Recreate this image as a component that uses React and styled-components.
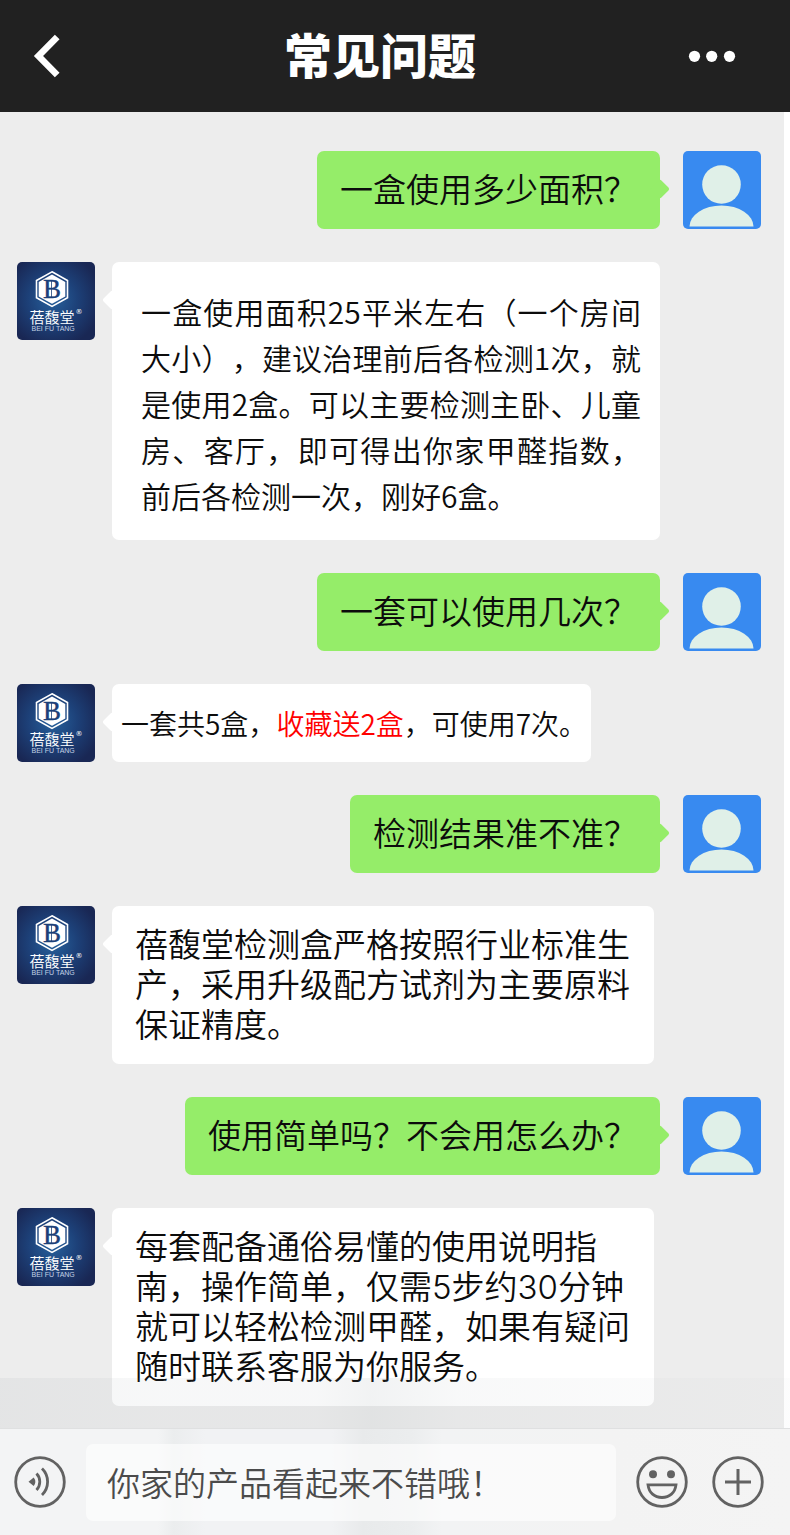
import styled, { createGlobalStyle } from "styled-components";

const GlobalStyle = createGlobalStyle`
  * {
    box-sizing: border-box;
  }

  body {
    margin: 0;
    background: #ffffff;
    color: #0c0c0c;
    font-family: "Noto Sans CJK SC", sans-serif;
    font-weight: 350;
    text-spacing-trim: space-all;
  }

  button,
  input {
    font: inherit;
    border: 0;
    padding: 0;
    background: none;
  }
`;

const Page = styled.div`
  display: flex;
  flex-direction: column;
  min-height: 100vh;
`;

const Header = styled.header`
  display: grid;
  grid-template-columns: 52px 1fr 48px;
  align-items: center;
  height: 112px;
  padding: 0 54px 0 20px;
  background: #212121;
  color: #ffffff;
`;

const Title = styled.h1`
  margin: 0;
  padding-bottom: 6px;
  font-size: 48px;
  line-height: 56px;
  font-weight: 900;
  text-align: center;
`;

const IconButton = styled.button`
  display: flex;
  flex-shrink: 0;
  align-items: center;
  justify-content: center;
  width: ${(props) => props.$width || 52}px;
  height: 52px;
  color: inherit;
  cursor: pointer;
`;

const Chat = styled.main`
  display: flex;
  flex-direction: column;
  flex: 1;
  gap: 33px;
  margin-right: 6px;
  padding: 39px 23px 22px 17px;
  background: #ededed;
`;

const Row = styled.div`
  display: flex;
  flex-direction: ${(props) => (props.$mine ? "row-reverse" : "row")};
  align-items: flex-start;
  gap: ${(props) => (props.$mine ? 23 : 17)}px;
`;

const Avatar = styled.svg`
  flex-shrink: 0;
  width: 78px;
  height: 78px;
  border-radius: 5px;
`;

const Bubble = styled.p`
  position: relative;
  max-width: 548px;
  margin: 0;
  padding: 19px 23px;
  border-radius: 7px;
  background: ${(props) => (props.$mine ? "#95ed69" : "#ffffff")};
  font-family: Inter, "Noto Sans CJK SC", sans-serif;
  font-size: 33px;
  line-height: 40px;

  &::before {
    content: "";
    position: absolute;
    top: 31px;
    ${(props) => (props.$mine ? "right" : "left")}: -7px;
    width: 14px;
    height: 14px;
    border-radius: 2px;
    background: inherit;
    transform: rotate(45deg);
  }
`;

const LongBubble = styled(Bubble)`
  padding: 26px 19px 22px 29px;
  font-family: "Noto Sans CJK SC", sans-serif;
  font-size: 30px;
  line-height: 46px;
  text-align: justify;
`;

const ShortBubble = styled(Bubble)`
  padding: 19px 4px 19px 9px;
  font-family: "Noto Sans CJK SC", sans-serif;
  font-size: 28px;
`;

const AnswerBubble = styled(Bubble)`
  max-width: 542px;
`;

const Highlight = styled.span`
  color: #ff0000;
`;

const Footer = styled.footer`
  position: relative;
  margin-top: -50px;
  padding-top: 50px;
  background: linear-gradient(
    90deg,
    rgba(120, 130, 140, 0.08) 0%,
    rgba(120, 130, 140, 0.06) 20%,
    rgba(120, 130, 140, 0.06) 40%,
    rgba(120, 135, 140, 0.1) 47%,
    rgba(120, 130, 140, 0.05) 58%,
    rgba(120, 130, 140, 0.02) 100%
  );
`;

const Composer = styled.form`
  display: flex;
  align-items: center;
  height: 107px;
  padding: 0 26px 0 14px;
  border-top: 1px solid #dfe0e1;
  background: linear-gradient(
    90deg,
    #f3f4f5 0%,
    #f3f4f5 20%,
    #ebedee 22%,
    #f1f2f4 26%,
    #f1f2f4 42%,
    #e8eaeb 46%,
    #ebedee 52%,
    #f2f3f4 56%,
    #f3f3f3 78%,
    #f4f4f4 100%
  );
  color: #626262;
`;

const Field = styled.input`
  flex: 1;
  min-width: 0;
  height: 77px;
  margin: 0 20px;
  padding: 0 21px;
  border-radius: 7px;
  background: rgba(255, 255, 255, 0.6);
  color: #4b4b4b;
  font-size: 33px;

  &:focus {
    outline: none;
  }
`;

const Tools = styled.div`
  display: flex;
  gap: 24px;
`;

const UserAvatar = () => (
  <Avatar viewBox="0 0 78 78" role="img" aria-label="用户">
    <rect width="78" height="78" fill="#388af0" />
    <circle cx="38.5" cy="33.5" r="19.3" fill="#e0f0e8" />
    <path d="M6.5 75.5a32 21 0 0 1 64 0z" fill="#e0f0e8" />
  </Avatar>
);

const ShopAvatar = () => (
  <Avatar viewBox="0 0 78 78" role="img" aria-label="蓓馥堂">
    <defs>
      <radialGradient id="shop" cx="46%" cy="48%" r="62%">
        <stop offset="0" stopColor="#27619c" />
        <stop offset="0.5" stopColor="#1d4179" />
        <stop offset="1" stopColor="#192754" />
      </radialGradient>
    </defs>
    <rect width="78" height="78" fill="url(#shop)" />
    <path
      d="M35 9.8 50.5 18.5v17.2L35 44.4 19.500 35.7V18.5z"
      fill="none"
      stroke="#ffffff"
      strokeWidth="1.6"
    />
    <path d="M35 12.5 48.3 20v14.400L35 41.700 21.700 34.400V20z" fill="#ffffff" />
    <text
      x="35"
      y="36"
      textAnchor="middle"
      fontFamily="Liberation Serif, serif"
      fontWeight="400"
      fontSize="27"
      fill="#1b4079"
      stroke="#1b4079"
      strokeWidth="0.4"
    >
      B
    </text>
    <path d="M34.500 19v17" stroke="#1b4079" strokeWidth="0.8" />
    <text x="12.5" y="61" fontSize="15" fontWeight="350" fill="#ffffff">
      蓓馥堂
    </text>
    <text
      x="58.5"
      y="52"
      fontFamily="DejaVu Sans, sans-serif"
      fontSize="7"
      fontWeight="400"
      fill="#ffffff"
    >
      ®
    </text>
    <text
      x="14.5"
      y="69"
      fontFamily="Liberation Sans, sans-serif"
      fontSize="7"
      fontWeight="400"
      fill="#c3d2e5"
    >
      BEI FU TANG
    </text>
  </Avatar>
);

const BackIcon = () => (
  <svg width="52" height="52" viewBox="0 0 52 52" fill="none">
    <path d="M37.2 7 18.500 26 37.2 45" stroke="#ffffff" strokeWidth="6.6" />
  </svg>
);

const MoreIcon = () => (
  <svg width="48" height="12" viewBox="0 0 48 12" fill="#ffffff">
    <circle cx="6.5" cy="6.3" r="5.6" />
    <circle cx="23.7" cy="6.3" r="5.6" />
    <circle cx="41.5" cy="6.3" r="5.6" />
  </svg>
);

const VoiceIcon = () => (
  <svg width="52" height="52" viewBox="0 0 52 52" fill="none" stroke="currentColor">
    <circle cx="26" cy="26" r="24.3" strokeWidth="2.8" />
    <path d="M14.5 25.7 19.7 21.500a7 7 0 0 1 0 8.5z" fill="currentColor" stroke="none" />
    <path d="M22.5 17.5a12 12 0 0 1 0 16.5" strokeWidth="2.8" />
    <path d="M28 12.5a18.5 18.5 0 0 1 0 26.5" strokeWidth="2.8" />
  </svg>
);

const SmileIcon = () => (
  <svg width="52" height="52" viewBox="0 0 52 52" fill="none" stroke="currentColor">
    <circle cx="26" cy="26" r="24.3" strokeWidth="2.8" />
    <circle cx="17" cy="18.3" r="4" fill="currentColor" stroke="none" />
    <circle cx="35" cy="18.3" r="4" fill="currentColor" stroke="none" />
    <path d="M12 28.8h28c-1 8-6.5 12.7-14 12.7s-13-4.7-14-12.7z" strokeWidth="2.8" />
  </svg>
);

const PlusIcon = () => (
  <svg width="52" height="52" viewBox="0 0 52 52" fill="none" stroke="currentColor">
    <circle cx="26" cy="26" r="24.3" strokeWidth="2.8" />
    <path d="M13 26h26M26 13v26" strokeWidth="3" />
  </svg>
);

const Question = ({ children }) => (
  <Row $mine>
    <UserAvatar />
    <Bubble $mine>{children}</Bubble>
  </Row>
);

const App = () => {
  return (
    <Page>
      <GlobalStyle />
      <Header>
        <IconButton type="button" aria-label="返回">
          <BackIcon />
        </IconButton>
        <Title>常见问题</Title>
        <IconButton type="button" $width={48} aria-label="更多">
          <MoreIcon />
        </IconButton>
      </Header>
      <Chat>
        <Question>一盒使用多少面积？</Question>
        <Row>
          <ShopAvatar />
          <LongBubble>
            一盒使用面积25平米左右（一个房间大小），建议治理前后各检测1次，就是使用2盒。可以主要检测主卧、儿童房、客厅，即可得出你家甲醛指数，前后各检测一次，刚好6盒。
          </LongBubble>
        </Row>
        <Question>一套可以使用几次？</Question>
        <Row>
          <ShopAvatar />
          <ShortBubble>
            一套共5盒，<Highlight>收藏送2盒</Highlight>，可使用7次。
          </ShortBubble>
        </Row>
        <Question>检测结果准不准？</Question>
        <Row>
          <ShopAvatar />
          <AnswerBubble>
            蓓馥堂检测盒严格按照行业标准生产，采用升级配方试剂为主要原料保证精度。
          </AnswerBubble>
        </Row>
        <Question>使用简单吗？不会用怎么办？</Question>
        <Row>
          <ShopAvatar />
          <AnswerBubble>
            每套配备通俗易懂的使用说明指南，操作简单，仅需5步约30分钟就可以轻松检测甲醛，如果有疑问随时联系客服为你服务。
          </AnswerBubble>
        </Row>
      </Chat>
      <Footer>
        <Composer>
          <IconButton type="button" aria-label="语音">
            <VoiceIcon />
          </IconButton>
          <Field type="text" aria-label="消息" defaultValue="你家的产品看起来不错哦！" />
          <Tools>
            <IconButton type="button" aria-label="表情">
              <SmileIcon />
            </IconButton>
            <IconButton type="button" aria-label="添加">
              <PlusIcon />
            </IconButton>
          </Tools>
        </Composer>
      </Footer>
    </Page>
  );
};

export default App;
